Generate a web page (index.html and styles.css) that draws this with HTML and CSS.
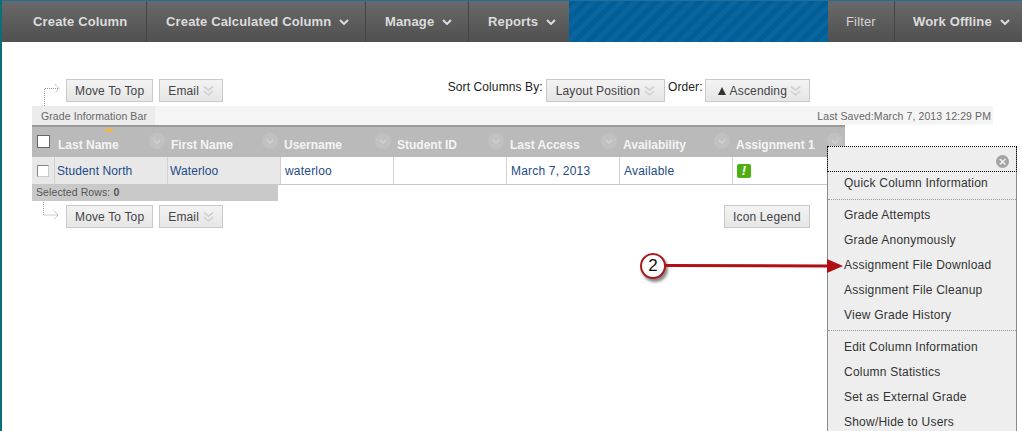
FILE: index.html
```html
<!DOCTYPE html>
<html lang="en">
<head>
  <meta charset="UTF-8" />
  <title>Grade Center</title>
  <link rel="stylesheet" href="styles.css">
</head>
<body>
  <svg class="defs" width="0" height="0">
    <symbol id="chev" viewBox="0 0 10 6"><path d="M1 1l4 4 4-4" fill="none" stroke="currentColor" stroke-width="2"/></symbol>
    <symbol id="dbl" viewBox="0 0 14 14"><path d="M1 1l6 5 6-5M1 7l6 5 6-5" fill="none" stroke="currentColor" stroke-width="2"/></symbol>
    <symbol id="elbow" viewBox="0 0 16 26"><path d="M.5 25V7.500H15M11 3l4 4.500-4 4.500" fill="none" stroke="#999" stroke-dasharray="1 1"/></symbol>
    <symbol id="elbow-up" viewBox="0 0 16 20"><path d="M.5 0V13H15M11 8.500l4 4.500-4 4.500" fill="none" stroke="#999" stroke-dasharray="1 1"/></symbol>
  </svg>

  <nav class="topbar">
    <a class="nav-item w1">Create Column</a>
    <a class="nav-item w2">Create Calculated Column <svg class="chev"><use href="#chev"/></svg></a>
    <a class="nav-item w3">Manage <svg class="chev"><use href="#chev"/></svg></a>
    <a class="nav-item w4">Reports <svg class="chev"><use href="#chev"/></svg></a>
    <div class="nav-fill"></div>
    <a class="nav-item w5 light">Filter</a>
    <a class="nav-item w6">Work Offline <svg class="chev"><use href="#chev"/></svg></a>
  </nav>

  <main class="content">
    <div class="toolbar">
      <svg class="elbow"><use href="#elbow"/></svg>
      <button class="btn">Move To Top</button>
      <button class="btn">Email <svg class="dbl"><use href="#dbl"/></svg></button>
      <div class="sort">
        <span class="sort-label">Sort Columns By:</span>
        <button class="btn layout">Layout Position <svg class="dbl"><use href="#dbl"/></svg></button>
        <span class="sort-label">Order:</span>
        <button class="btn order"><span class="tri"></span>Ascending <svg class="dbl"><use href="#dbl"/></svg></button>
      </div>
    </div>

    <div class="infobar">
      <span class="info-tab">Grade Information Bar</span>
      <span class="saved">Last Saved:March 7, 2013 12:29 PM</span>
    </div>

    <div class="grid head">
      <div class="cell-check"><span class="checkbox head-box"></span></div>
      <div class="th sorted">Last Name<span class="round"><svg class="chev"><use href="#chev"/></svg></span></div>
      <div class="th">First Name<span class="round"><svg class="chev"><use href="#chev"/></svg></span></div>
      <div class="th">Username<span class="round"><svg class="chev"><use href="#chev"/></svg></span></div>
      <div class="th">Student ID<span class="round"><svg class="chev"><use href="#chev"/></svg></span></div>
      <div class="th">Last Access<span class="round"><svg class="chev"><use href="#chev"/></svg></span></div>
      <div class="th">Availability<span class="round"><svg class="chev"><use href="#chev"/></svg></span></div>
      <div class="th">Assignment 1<span class="round"><svg class="chev"><use href="#chev"/></svg></span></div>
    </div>
    <div class="grid row">
      <div class="cell-check shade"><span class="checkbox"></span></div>
      <div class="td shade">Student North</div>
      <div class="td shade">Waterloo</div>
      <div class="td wide">waterloo</div>
      <div class="td"></div>
      <div class="td wide">March 7, 2013</div>
      <div class="td wide">Available</div>
      <div class="td"><span class="flag-icon">!</span></div>
    </div>
    <div class="selected">Selected Rows: <b>0</b></div>

    <div class="toolbar bottom">
      <svg class="elbow up"><use href="#elbow-up"/></svg>
      <button class="btn">Move To Top</button>
      <button class="btn">Email <svg class="dbl"><use href="#dbl"/></svg></button>
      <button class="btn legend">Icon Legend</button>
    </div>
  </main>

  <div class="menu">
    <div class="menu-head"><span class="close">×</span></div>
    <ul class="menu-group first">
      <li>Quick Column Information</li>
    </ul>
    <ul class="menu-group">
      <li>Grade Attempts</li>
      <li>Grade Anonymously</li>
      <li>Assignment File Download</li>
      <li>Assignment File Cleanup</li>
      <li>View Grade History</li>
    </ul>
    <ul class="menu-group">
      <li>Edit Column Information</li>
      <li>Column Statistics</li>
      <li>Set as External Grade</li>
      <li>Show/Hide to Users</li>
    </ul>
  </div>

  <!-- callout -->
  <div class="callout">2</div>
  <svg class="callout-arrow" width="180" height="18" viewBox="0 0 180 18">
    <path d="M0 8.500L164 9" stroke="#b00f14" stroke-width="3" fill="none"/>
    <path d="M162 2L178 9 162 16z" fill="#b00f14"/>
  </svg>
</body>
</html>
```

FILE: styles.css
```css
html, body {
  margin: 0;
  height: 431px;
  overflow: hidden;
}

body {
  background: #fff;
  color: #333;
  font-family: "Liberation Sans", Arial, sans-serif;
  font-size: 12px;
  border-left: 2px solid #0b6f78;
  position: relative;
}

.defs {
  position: absolute;
}

.topbar {
  display: flex;
  height: 41px;
  border-top: 1px solid #1f6f9f;
}

.nav-item {
  display: flex;
  align-items: center;
  gap: 8px;
  box-sizing: border-box;
  height: 100%;
  padding-left: 19px;
  background: linear-gradient(#696969, #505050);
  border-right: 1px solid #444;
  color: #dcdcdc;
  font-size: 13px;
  font-weight: bold;
  letter-spacing: 0.15px;
}

.nav-item.light {
  font-weight: normal;
  color: #d4d4d4;
}

.w1 { width: 145px; padding-left: 31px; }
.w2 { width: 219px; }
.w3 { width: 103px; }
.w4 { width: 100px; border-right: none; }
.w5 { width: 67px; padding-left: 18px; }
.w6 { width: 127px; padding-left: 18px; border-right: none; }

.nav-fill {
  flex: 1;
  background: repeating-linear-gradient(135deg, #005f98 0 5px, #0a659c 5px 10px);
}

.chev {
  width: 10px;
  height: 6px;
  color: #dcdcdc;
}

.content {
  padding: 37px 0 0 30px;
  width: 961px;
}

.toolbar {
  display: flex;
  align-items: flex-start;
  gap: 6px;
  height: 23px;
  position: relative;
}

.elbow {
  width: 16px;
  height: 26px;
  margin: 2px 0 0 12px;
  flex: none;
}

.elbow.up {
  height: 20px;
  margin: -3px 1px 0 11px;
}

.btn {
  display: flex;
  align-items: center;
  gap: 4px;
  box-sizing: border-box;
  height: 23px;
  padding: 0 8px;
  background: linear-gradient(#f3f3f3, #e6e6e6);
  border: 1px solid #c9c9c9;
  color: #444;
  font-family: inherit;
  font-size: 12px;
  letter-spacing: 0.15px;
}

.dbl {
  width: 11px;
  height: 12px;
  color: #d0d0d0;
}

.sort {
  display: flex;
  align-items: flex-start;
  gap: 3px;
  margin-left: auto;
  margin-right: 183px;
}

.sort-label {
  color: #222;
  line-height: 16px;
  letter-spacing: 0.1px;
}

.layout {
  padding: 0 9px;
}

.order {
  padding: 0 8px 0 12px;
  gap: 3px;
  margin-left: -1px;
}

.tri {
  width: 0;
  height: 0;
  margin-right: 1px;
  border-left: 4px solid transparent;
  border-right: 4px solid transparent;
  border-bottom: 8px solid #333;
}

.infobar {
  display: flex;
  justify-content: space-between;
  align-items: center;
  box-sizing: border-box;
  height: 19px;
  margin-top: 4px;
  background: #f5f5f5;
  font-size: 10.5px;
  color: #666;
  letter-spacing: 0.1px;
}

.info-tab {
  display: flex;
  align-items: center;
  height: 100%;
  padding: 0 8px 0 9px;
  background: #ececec;
}

.saved {
  padding-right: 2px;
}

.grid {
  display: grid;
  grid-template-columns: 22px repeat(7, 113px);
  width: 813px;
}

.head {
  box-sizing: border-box;
  height: 32px;
  background: #bababa;
  border-top: 2px solid #999;
  position: relative;
}

.th {
  position: relative;
  padding: 11px 0 0 4px;
  color: #f4f4f4;
  font-weight: bold;
}

.sorted::before {
  content: "";
  position: absolute;
  top: 0;
  left: 50px;
  border-left: 5px solid transparent;
  border-right: 5px solid transparent;
  border-bottom: 5px solid #f0b64a;
}

.round {
  position: absolute;
  top: 6px;
  right: 2px;
  display: flex;
  align-items: center;
  justify-content: center;
  width: 16px;
  height: 16px;
  border-radius: 50%;
  background: #c1c1c1;
}

.round .chev {
  width: 8px;
  height: 5px;
  color: #d0d0d0;
}

.cell-check {
  display: flex;
  align-items: center;
  justify-content: center;
}

.head .cell-check {
  align-items: flex-start;
  padding-top: 8px;
}

.checkbox {
  box-sizing: border-box;
  width: 12px;
  height: 12px;
  margin-right: 1px;
  background: #fff;
  border: 1px solid #888;
  border-right-color: #ccc;
  border-bottom-color: #ccc;
}

.head-box {
  width: 13px;
  height: 13px;
  margin-right: 0;
  border-color: #666;
}

.row {
  height: 28px;
  box-sizing: border-box;
  border-bottom: 1px solid #c8c8c8;
}

.td {
  display: flex;
  align-items: center;
  padding-left: 2px;
  border-left: 1px solid #d2d2d2;
  color: #1d4b87;
  letter-spacing: 0.1px;
}

.td.wide {
  padding-left: 4px;
  letter-spacing: 0.2px;
}

.shade {
  background: #e8e8e8;
}

.flag-icon {
  display: flex;
  align-items: center;
  justify-content: center;
  width: 14px;
  height: 14px;
  margin-left: 2px;
  border-radius: 2px;
  background: #4fae12;
  color: #fff;
  font-weight: bold;
  font-style: italic;
  font-size: 13px;
}

.selected {
  box-sizing: border-box;
  width: 246px;
  height: 16px;
  padding: 1px 0 0 4px;
  background: #c9c9c9;
  color: #555;
  font-size: 10.5px;
  letter-spacing: 0.1px;
}

.toolbar.bottom {
  margin-top: 4px;
}

.legend {
  position: absolute;
  left: 692px;
}

.menu {
  position: absolute;
  left: 825px;
  top: 146px;
  box-sizing: border-box;
  width: 190px;
  height: 300px;
  background: #eee;
  border-left: 1px solid #8a8a8a;
  border-right: 1px solid #8a8a8a;
}

.menu-head {
  box-sizing: border-box;
  display: flex;
  justify-content: flex-end;
  align-items: center;
  height: 26px;
  margin: 0 -1px;
  padding: 4px 7px 0 0;
  border: 1px dotted #000;
}

.close {
  display: flex;
  align-items: center;
  justify-content: center;
  width: 13px;
  height: 13px;
  border-radius: 50%;
  background: #a3a3a3;
  color: #eee;
  font-weight: bold;
  font-size: 13px;
  line-height: 13px;
}

.menu-group {
  display: flex;
  flex-direction: column;
  gap: 10px;
  list-style: none;
  margin: 0;
  padding: 8px 0 7px;
  border-bottom: 1px dotted #999;
}

.menu-group.first {
  padding: 4px 0 8px;
}

.menu-group li {
  height: 15px;
  line-height: 15px;
  padding-left: 16px;
  color: #333;
  letter-spacing: 0.22px;
}

.menu-group:last-child {
  padding-top: 9px;
  border-bottom: none;
}

.callout {
  position: absolute;
  left: 638px;
  top: 253px;
  box-sizing: border-box;
  display: flex;
  align-items: center;
  justify-content: center;
  width: 26px;
  height: 26px;
  border: 2px solid #a81c20;
  border-radius: 50%;
  background: #fff;
  color: #111;
  font-size: 17px;
  box-shadow: 2px 3px 3px #888;
}

.callout-arrow {
  position: absolute;
  left: 663px;
  top: 257px;
}
```
